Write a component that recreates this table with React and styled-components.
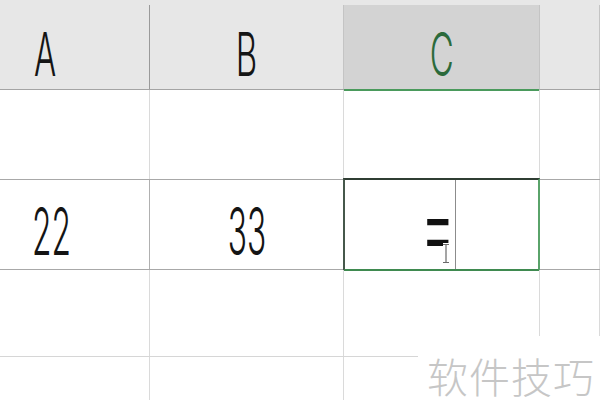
import React from "react";
import styled, { createGlobalStyle } from "styled-components";

const Global = createGlobalStyle`
  html, body { margin: 0; padding: 0; background: #ffffff; }
  #root { width: 600px; height: 400px; }
`;

const COLS = "150px 194px 196px 1fr";

const Sheet = styled.div`
  position: relative;
  width: 600px;
  height: 400px;
  overflow: hidden;
  background: #ffffff;
  font-family: Inter, "Liberation Sans", sans-serif;
`;

const HeaderRow = styled.div`
  display: grid;
  grid-template-columns: ${COLS};
  height: 90px;
  box-sizing: border-box;
  padding-top: 5px;
  background: #e7e7e7;
  border-bottom: 1.5px solid #a4a4a4;
`;

const HeadCell = styled.div`
  display: flex;
  align-items: center;
  justify-content: center;
  box-sizing: border-box;
  padding-top: 14px;
  padding-right: ${(p) => p.$shift || 0}px;
  background: ${(p) => (p.$active ? "#d3d3d3" : "transparent")};
  border-right: 1.5px solid ${(p) => p.$line || "#c4c4c4"};
  border-bottom: ${(p) => (p.$active ? "2px solid #4a9a5c" : "none")};
  margin-bottom: ${(p) => (p.$active ? "-1.5px" : "0")};
  color: ${(p) => (p.$active ? "#2b6a3b" : "#151515")};
`;

const Glyph = styled.span`
  display: inline-block;
  font-size: ${(p) => p.$size || 66}px;
  font-weight: 300;
  line-height: 1;
  transform: scaleX(${(p) => p.$sx || 0.5});
`;

const Row = styled.div`
  display: grid;
  grid-template-columns: ${COLS};
  height: ${(p) => p.$h}px;
  box-sizing: border-box;
  border-bottom: ${(p) => (p.$strong ? "1.5px solid #a8a8a8" : "1.5px solid #d6d6d6")};
`;

const Cell = styled.div`
  position: relative;
  display: flex;
  align-items: center;
  justify-content: center;
  box-sizing: border-box;
  padding-top: 12px;
  padding-right: ${(p) => p.$shift || 0}px;
  border-right: 1.5px solid ${(p) => (p.$strong ? "#b0b0b0" : "#dadada")};
  color: #141414;
`;

const ActiveCell = styled.div`
  position: relative;
  display: flex;
  box-sizing: border-box;
  min-height: 0;
  border-right: 1.5px solid #dadada;
  &::after {
    content: "";
    position: absolute;
    left: -1px;
    top: -2px;
    right: -1px;
    bottom: -2px;
    border-top: 2.5px solid #2f3d33;
    border-left: 2.5px solid #46584b;
    border-right: 2px solid #5aa36a;
    border-bottom: 2.5px solid #3f8a50;
    pointer-events: none;
  }
`;

const EditPart = styled.div`
  width: 112px;
  height: 100%;
  display: flex;
  align-items: center;
  justify-content: flex-end;
  padding-top: 0;
  padding-right: 0;
  box-sizing: border-box;
  border-right: 1.5px solid #8c8c8c;
  color: #111;
`;

const Equals = styled.span`
  display: inline-block;
  height: 40px;
  font-size: 90px;
  font-weight: 300;
  line-height: 40px;
  transform: scale(0.58, 1.12);
  transform-origin: right center;
`;

const Caret = styled.svg`
  position: absolute;
  left: 97px;
  top: 63px;
`;

const Watermark = styled.div`
  position: absolute;
  right: 0;
  bottom: 0;
  width: 182px;
  height: 64px;
  background: #ffffff;
  display: flex;
  align-items: flex-end;
  justify-content: flex-end;
  padding: 0 5px 1px 0;
  box-sizing: border-box;
`;

const WatermarkText = styled.span`
  display: block;
  font-family: "Noto Sans CJK SC", "Noto Sans", sans-serif;
  font-size: 41px;
  font-weight: 300;
  letter-spacing: 1px;
  color: #c6c6c6;
  line-height: 48px;
  white-space: nowrap;
`;

export default function App() {
  return (
    <>
      <Global />
      <Sheet>
        <HeaderRow>
          <HeadCell $shift={58} $line="#9a9a9a">
            <Glyph $size={60} $sx={0.55}>A</Glyph>
          </HeadCell>
          <HeadCell>
            <Glyph $size={60} $sx={0.55}>B</Glyph>
          </HeadCell>
          <HeadCell $active>
            <Glyph $size={60} $sx={0.55}>C</Glyph>
          </HeadCell>
          <HeadCell />
        </HeaderRow>

        <Row $h={90} $strong>
          <Cell />
          <Cell />
          <Cell />
          <Cell />
        </Row>

        <Row $h={90} $strong>
          <Cell $shift={46} $strong>
            <Glyph $sx={0.48}>22</Glyph>
          </Cell>
          <Cell $strong>
            <Glyph $sx={0.48}>33</Glyph>
          </Cell>
          <ActiveCell>
            <EditPart>
              <Equals>=</Equals>
            </EditPart>
            <Caret width="10" height="21" viewBox="0 0 10 21">
              <path d="M2 1.5h6M5 1.5v18M2 19.5h6" stroke="#ffffff" strokeWidth="3" fill="none" />
              <path d="M2 1.5h6M5 1.5v18M2 19.5h6" stroke="#6a6a6a" strokeWidth="1.2" fill="none" />
            </Caret>
          </ActiveCell>
          <Cell />
        </Row>

        <Row $h={87}>
          <Cell />
          <Cell />
          <Cell />
          <Cell />
        </Row>

        <Row $h={60}>
          <Cell />
          <Cell />
          <Cell />
          <Cell />
        </Row>

        <Watermark>
          <WatermarkText>软件技巧</WatermarkText>
        </Watermark>
      </Sheet>
    </>
  );
}
